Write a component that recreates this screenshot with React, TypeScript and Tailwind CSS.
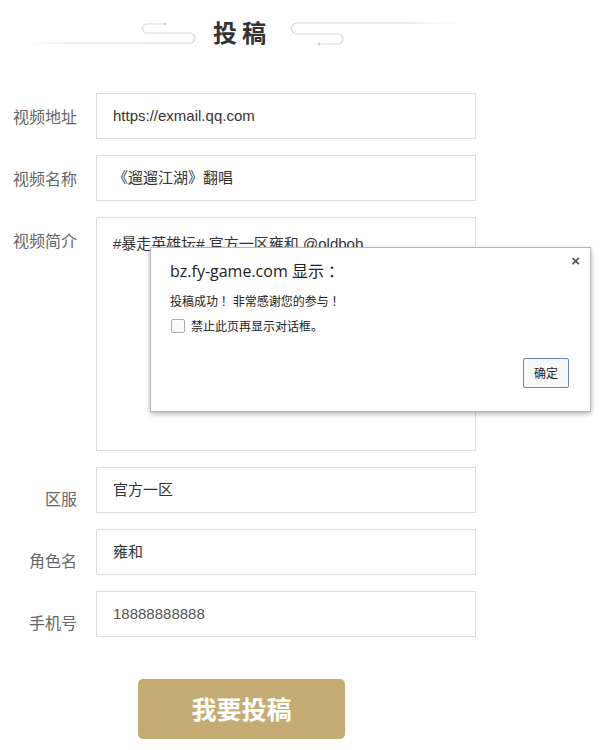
import React from "react";

const cjk = { fontFamily: '"Noto Sans CJK SC", "Noto Sans", sans-serif' };
const latin = { fontFamily: '"Liberation Sans", "Noto Sans CJK SC", sans-serif' };

function Row({
  label,
  value,
  low,
  tall,
  valueClass,
}: {
  label: string;
  value: string;
  low?: boolean;
  tall?: boolean;
  valueClass?: string;
}) {
  return (
    <div className="flex items-start gap-[19px]">
      <div
        className={`w-[77px] text-right text-[16px] leading-[22px] text-[#666] ${low ? "mt-[20px]" : "mt-[12px]"}`}
        style={cjk}
      >
        {label}
      </div>
      <div
        className={`w-[380px] border border-[#dcdcdc] bg-white pl-[16px] text-[15px] ${
          tall ? "h-[234px] pt-[15px] leading-[22px]" : "h-[46px] flex items-center"
        } ${valueClass ?? "text-[#333]"}`}
        style={latin}
      >
        {value}
      </div>
    </div>
  );
}

export default function App() {
  return (
    <div className="relative h-[750px] w-[600px] overflow-hidden bg-white">
      {/* title */}
      <div className="flex h-[70px] items-start pt-[18px] pl-[26px]">
        <svg width="170" height="30" viewBox="0 0 170 30" className="shrink-0">
          <defs>
            <linearGradient id="gl" x1="0" x2="1" y1="0" y2="0">
              <stop offset="0" stopColor="#ececec" stopOpacity="0.2" />
              <stop offset="0.25" stopColor="#dcdcdc" />
              <stop offset="1" stopColor="#d6d6d6" />
            </linearGradient>
          </defs>
          <path
            d="M4 25 H164 A5 5 0 0 0 164 15 H121 A4.5 4.5 0 0 1 121 6 H137"
            fill="none"
            stroke="url(#gl)"
            strokeWidth="1.2"
          />
          <circle cx="139" cy="6" r="1.4" fill="#cfcfcf" />
        </svg>
        <div
          className="ml-[17px] mt-[-2px] text-[24px] font-bold leading-[32px] tracking-[5px] text-[#333]"
          style={cjk}
        >
          投稿
        </div>
        <svg width="175" height="34" viewBox="0 0 175 34" className="ml-[17px] mt-[-3px] shrink-0">
          <defs>
            <linearGradient id="gr" x1="0" x2="1" y1="0" y2="0">
              <stop offset="0" stopColor="#d6d6d6" />
              <stop offset="0.75" stopColor="#dcdcdc" />
              <stop offset="1" stopColor="#eeeeee" stopOpacity="0.3" />
            </linearGradient>
          </defs>
          <path
            d="M170 8 H9 A5.5 5.5 0 0 0 9 19 H50 A5 5 0 0 1 50 29 H33"
            fill="none"
            stroke="url(#gr)"
            strokeWidth="1.2"
          />
          <circle cx="31" cy="29" r="1.4" fill="#cfcfcf" />
        </svg>
      </div>

      {/* form */}
      <div className="mt-[23px] flex flex-col gap-[16px]">
        <Row label="视频地址" value="https://exmail.qq.com" />
        <Row label="视频名称" value="《遛遛江湖》翻唱" />
        <Row label="视频简介" value="#暴走英雄坛# 官方一区雍和 @oldbob" tall />
        <Row label="区服" value="官方一区" low />
        <Row label="角色名" value="雍和" low />
        <Row label="手机号" value="18888888888" low valueClass="text-[#555]" />
      </div>

      <div className="mt-[42px] pl-[138px]">
        <div
          className="flex h-[60px] w-[207px] items-center justify-center rounded-[5px] bg-[#c4ab74] text-[25px] font-bold text-white"
          style={cjk}
        >
          我要投稿
        </div>
      </div>

      {/* dialog */}
      <div className="absolute left-[150px] top-[247px] h-[165px] w-[441px] border border-[#b5b5b5] bg-white shadow-[0_2px_5px_rgba(0,0,0,0.3)]">
        <div className="absolute right-[10px] top-[5px] text-[15px] font-bold leading-[16px] text-[#555]" style={latin}>
          ×
        </div>
        <div
          className="pl-[19px] pt-[12px] text-[16px] leading-[22px] text-[#222]"
          style={{ fontFamily: '"Open Sans", "Noto Sans CJK SC", sans-serif' }}
        >
          bz.fy-game.com 显示 ：
        </div>
        <div
          className="mt-[10px] pl-[19px] text-[12px] leading-[18px] text-[#222]"
          style={{ fontFamily: '"Noto Sans CJK SC", sans-serif' }}
        >
          投稿成功 ！非常感谢您的参与 ！
        </div>
        <div className="mt-[7px] flex items-center pl-[20px]">
          <div className="h-[14px] w-[14px] rounded-[2px] border border-[#aaa] bg-[#fafafa]" />
          <span className="ml-[6px] text-[12px] leading-[18px] text-[#222]" style={cjk}>
            禁止此页再显示对话框。
          </span>
        </div>
        <div className="mt-[23px] flex justify-end pr-[21px]">
          <div
            className="flex h-[30px] w-[46px] items-center justify-center rounded-[2px] border border-[#6a88a8] bg-[#f7f7f7] text-[12px] text-[#222]"
            style={cjk}
          >
            确定
          </div>
        </div>
      </div>
    </div>
  );
}
